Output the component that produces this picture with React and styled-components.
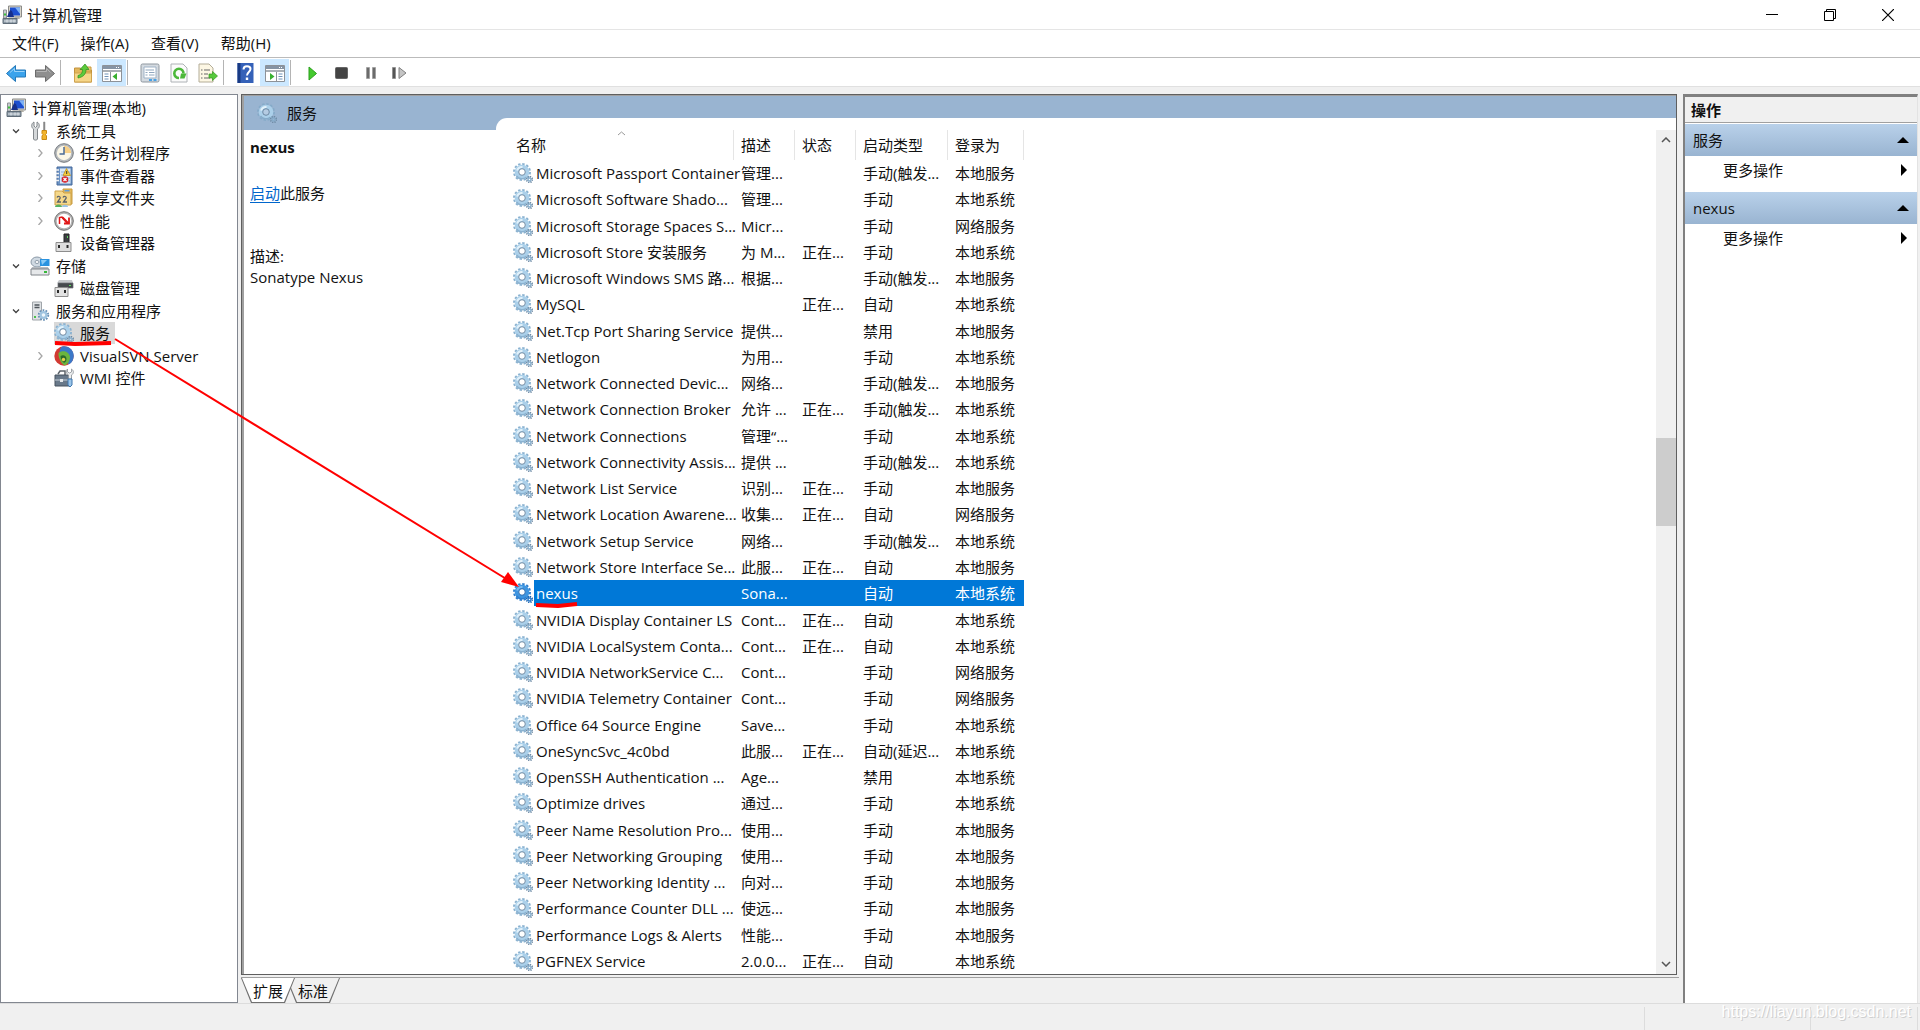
import React from 'react'
import styled, { createGlobalStyle, css } from 'styled-components'

const GlobalStyle = createGlobalStyle`
  * { box-sizing: border-box; }
  body {
    margin: 0;
    background: #f0f0f0;
    color: #111;
    font-family: "Open Sans", "Noto Sans CJK SC", sans-serif;
    font-size: 15px;
    line-height: 22px;
  }
  button { font: inherit; color: inherit; border: 0; padding: 0; background: none; }
  svg { display: block; flex: none; }
`

const Page = styled.div`
  position: relative;
  display: flex;
  flex-direction: column;
  min-height: 100vh;
  overflow: hidden;
`

/* title, menu and tool bars */

const TitleBar = styled.header`
  display: flex;
  align-items: center;
  height: 29px;
  padding: 0 3px 0 2px;
  background: #fff;
`

const WindowTitle = styled.h1`
  flex: 1;
  margin: 0 0 0 5px;
  font-size: 15px;
  font-weight: 400;
`

const WindowButton = styled.button`
  display: flex;
  justify-content: center;
  width: 58px;
`

const MenuBar = styled.nav`
  display: flex;
  align-items: flex-start;
  gap: 22px;
  height: 28px;
  padding: 2px 12px 0;
  background: #fff;
  border-top: 1px solid #e5e5e5;
`

const ToolBar = styled.div`
  display: flex;
  height: 30px;
  padding: 1px 1px 0;
  background: #fff;
  border-top: 1px solid #bbb;
  border-bottom: 1px solid #e0e0e0;
`

const Tool = styled.button`
  display: flex;
  align-items: center;
  justify-content: center;
  width: 29px;
  background: ${(props) => (props.$on ? '#cce8ff' : 'transparent')};
`

const ToolSep = styled.span`
  width: 1px;
  margin: 1px 7px 1px 1px;
  background: #b4b4b4;
`

/* work area */

const Work = styled.main`
  flex: 1;
  display: flex;
  padding: 7px 2px 0 0;
`

const TreePane = styled.ul`
  width: 238px;
  margin: 0 3px 0 0;
  padding: 2px 0;
  list-style: none;
  background: #fff;
  border: 1px solid #828790;
`

const TreeItem = styled.li`
  display: flex;
  align-items: center;
  height: 22px;
  padding-left: ${(props) => props.$level * 24 - 15}px;
  white-space: nowrap;
  &:nth-child(even) { height: 23px; }
  ${(props) => props.$level === 0 && css`padding-left: 5px;`}
`

const Twisty = styled.span`
  display: flex;
  width: 20px;
  padding-left: 2px;
`

const TreeLabel = styled.span`
  display: flex;
  align-items: center;
  gap: 6px;
  height: 100%;
  padding-right: 5px;
  background: ${(props) => (props.$selected ? '#d9d9d9' : 'transparent')};
`

const Center = styled.section`
  flex: 1;
  display: flex;
  flex-direction: column;
  margin-right: 4px;
`

const Frame = styled.div`
  flex: 1;
  display: grid;
  grid-template-columns: 252px 1fr;
  margin-right: 2px;
  margin-bottom: 2px;
  border: 1px solid #5f5f5f;
  box-shadow: inset 2px 1px 0 #a0a0a0;
  padding: 1px 0 0 2px;
`

const Details = styled.div`
  background: #fff;
`

const Banner = styled.div`
  display: flex;
  align-items: center;
  gap: 10px;
  height: 34px;
  padding-left: 13px;
  background: #99b4d1;
`

const ServiceName = styled.h2`
  margin: 6px 6px 24px;
  font-size: 15px;
  font-weight: 700;
`

const Line = styled.p`
  margin: 0 6px;
`

const StartLink = styled.a`
  color: #0066cc;
  text-decoration: underline;
  text-underline-offset: 3px;
`

const Description = styled.div`
  margin: 42px 6px 0;
  line-height: 21px;
`

const ListSide = styled.div`
  display: flex;
  padding-top: 22px;
  background: #99b4d1;
`

const ListBox = styled.div`
  flex: 1;
  display: flex;
  justify-content: space-between;
  padding: 12px 0 0 13px;
  background: #fff;
  border-top-left-radius: 11px;
`

const Table = styled.table`
  display: flex;
  flex-direction: column;
  width: 515px;
`

const Body = styled.tbody`
  flex: 1;
  display: grid;
  grid-auto-rows: 1fr;
`

const Row = styled.tr`
  display: grid;
  grid-template-columns: 225px 61px 61px 92px 76px;
  align-items: stretch;
`

const HeadCell = styled.th`
  position: relative;
  height: 30px;
  padding: 4px 7px 0;
  border-right: 1px solid #e5e5e5;
  font-weight: 400;
  text-align: left;
`

const SortMark = styled.svg`
  position: absolute;
  top: 1px;
  left: 108px;
`

const Cell = styled.td`
  display: flex;
  align-items: center;
  padding: 0 7px;
  white-space: nowrap;
  ${(props) => props.$selected && css`
    background: #0078d7;
    color: #fff;
  `}
`

const NameCell = styled.td`
  display: flex;
  align-items: center;
  padding: 0 0 0 4px;
  white-space: nowrap;
`

const NameText = styled.span`
  flex: 1;
  display: flex;
  align-items: center;
  align-self: stretch;
  margin-left: 1px;
  padding-left: 2px;
  ${(props) => props.$selected && css`
    background: #0078d7;
    color: #fff;
  `}
`

const ScrollBar = styled.div`
  display: flex;
  flex-direction: column;
  width: 20px;
  background: #f0f0f0;
`

const ScrollButton = styled.button`
  display: flex;
  align-items: center;
  justify-content: center;
  height: 20px;
`

const ScrollSpace = styled.div`
  flex: ${(props) => props.$grow};
`

const ScrollThumb = styled.div`
  flex: 22;
  background: #cdcdcd;
`

const TabStrip = styled.div`
  display: flex;
  height: 26px;
  border-top: 1px solid #a0a0a0;
`

const Tab = styled.button`
  position: relative;
  z-index: ${(props) => (props.$active ? 1 : 0)};
  width: 54px;
  height: 25px;
  margin-right: -9px;
  background: #707070;
  clip-path: polygon(0 0, 54px 0, 44px 25px, 10px 25px);
  &::before {
    content: '';
    position: absolute;
    z-index: -1;
    inset: 0;
    background: ${(props) => (props.$active ? '#fff' : '#f0f0f0')};
    clip-path: polygon(1px 0, 53px 0, 43px 24px, 11px 24px);
  }
`

/* actions pane */

const Actions = styled.aside`
  width: 235px;
  background: #fff;
  border-left: 2px solid #808080;
  border-top: 3px solid #808080;
  border-right: 1px solid #e3e3e3;
`

const ActionsTitle = styled.h2`
  height: 26px;
  margin: 0 0 1px;
  padding: 2px 6px;
  background: #f0f0f0;
  border-bottom: 1px solid #a0a0a0;
  font-size: 15px;
  font-weight: 700;
`

const ActionGroup = styled.button`
  display: flex;
  align-items: center;
  justify-content: space-between;
  width: 100%;
  height: 32px;
  padding: 0 8px;
  background: linear-gradient(#b9d1ea, #99b4d1);
`

const ActionItem = styled.button`
  display: flex;
  align-items: center;
  justify-content: space-between;
  width: 100%;
  height: 28px;
  margin-bottom: 8px;
  padding: 0 10px 0 38px;
`

const StatusBar = styled.footer`
  display: flex;
  justify-content: flex-end;
  height: 27px;
  padding: 3px 2px 0 0;
  border-top: 1px solid #dcdcdc;
`

const StatusPart = styled.span`
  width: ${(props) => props.$width}px;
  border-left: 1px solid #dcdcdc;
`

const Watermark = styled.span`
  position: absolute;
  right: 9px;
  bottom: 7px;
  color: #fff;
  font: 16px/22px "Liberation Sans", sans-serif;
  text-shadow: 1px 1px 0 #cfcfcf;
`

const Marks = styled.svg`
  position: absolute;
  top: 0;
  left: 0;
  z-index: 2;
  pointer-events: none;
`

/* icons */

const Icon = ({ children, size = 20 }) => (
  <svg width={size} height={size} viewBox="0 0 20 20" fill="none" aria-hidden="true">{children}</svg>
)

const GearIcon = ({ selected, pale }) => {
  const teeth = selected ? '#2f7fce' : pale ? '#86abc9' : '#8bb2d0'
  const edge = selected ? '#1c63ad' : '#6f8ba5'
  const body = selected ? '#3e95e0' : '#abd0ea'
  return (
    <Icon>
      <circle cx="9" cy="9" r="8" stroke={teeth} strokeWidth="2" strokeDasharray="2.400 1.790" />
      <circle cx="9" cy="9" r="5.300" stroke={body} strokeWidth="4" />
      <path d="M3.500 13a6.800 6.800 0 0 0 10 1" stroke={teeth} strokeWidth="1.500" />
      <path d="M4 7.500A5.500 5.500 0 0 1 9.500 4" stroke={selected ? '#7cbcf0' : '#e2f1fa'} strokeWidth="1.800" />
      <circle cx="9" cy="9" r="3.300" fill={pale ? '#b4cbe2' : '#fff'} stroke={edge} strokeWidth="1" />
      <circle cx="16.500" cy="16.500" r="2.800" stroke={edge} strokeWidth="1.800" strokeDasharray="1.200 1" />
      <circle cx="16.500" cy="16.500" r="1.500" stroke={teeth} strokeWidth="1.500" />
    </Icon>
  )
}

const ComputerIcon = () => (
  <Icon>
    <path d="M6.500 1h13v11h-13z" fill="#d9d6cc" stroke="#8b8b88" />
    <path d="M8 2.500h10v8H8z" fill="#1d4fd0" />
    <path d="M13 2.500h5V9z" fill="#7eb2f5" />
    <path d="M13 12h4l1 2h-5z" fill="#b5b2a8" />
    <path d="M1.500 5h3v8h-3z" fill="#c9ccd0" stroke="#8e9296" />
    <path d="M2 8.500h2v2H2z" fill="#3cc13c" />
    <path d="M5 12l3-7 2 1 2 6z" fill="#17308c" />
    <path d="M1 13.500h14v5H1z" fill="#8b98a4" stroke="#5f6c78" />
    <path d="M2 16h12M5 14.500v3M9 14.500v3M12 14.500v3" stroke="#dfe5ea" />
  </Icon>
)

const ToolsIcon = () => (
  <Icon>
    <path d="M4 1v4l1.500 1.500L7 5V1c3 1.500 3 5.500.5 7v10c0 1.500-4 1.500-4 0V8C1 6.500 1 2.500 4 1z" fill="#d5d8da" stroke="#83888c" />
    <path d="M13.500 1h1.500v8h-1.500z" fill="#888" stroke="#888" strokeWidth=".5" />
    <path d="M12 9.500h4.500v3l-1 1 1 1.500v3.500H12V15l1-1.500-1-1z" fill="#f3b52c" stroke="#c98a12" />
  </Icon>
)

const ClockIcon = () => (
  <Icon>
    <circle cx="10" cy="10" r="9.300" fill="#b4b8bc" stroke="#74787d" />
    <circle cx="10" cy="10" r="7.200" fill="#fbf6e6" />
    <path d="M10 10V2.800A7.200 7.200 0 0 1 17.200 10z" fill="#f7cf86" />
    <path d="M10 4v7H5.500" stroke="#4b6b96" strokeWidth="1.500" />
  </Icon>
)

const EventIcon = () => (
  <Icon>
    <path d="M3 1h15v18H3z" fill="#6c93c4" stroke="#44689b" />
    <path d="M6 2.500h10.500v15H6z" fill="#d8e6f6" />
    <path d="M7 6h9M7 9h9M7 12h9M7 15h9" stroke="#8fb0d6" />
    <path d="M2 4h3M2 7.500h3M2 11h3M2 14.500h3" stroke="#f2f2f2" strokeWidth="1.500" />
    <path d="M12.500 2.500l4 7H9z" fill="#f6cc3c" stroke="#c08c12" strokeWidth=".7" />
    <path d="M12.700 5v3" stroke="#333" />
    <circle cx="11" cy="13.500" r="3.300" fill="#d6202a" />
    <path d="M9.500 12l3 3M12.500 12l-3 3" stroke="#fff" strokeWidth="1.200" />
  </Icon>
)

const ShareIcon = () => (
  <Icon>
    <path d="M9 1h9v15H9z" fill="#e4b95c" stroke="#c99b3d" />
    <path d="M1 3h7l2 2h7v12H1z" fill="#f5d88a" stroke="#cda24a" />
    <path d="M10.500 2h5v1.500h-5z" fill="#5f9bd8" />
    <path d="M3 9.500c1-2 4-1 3 1L3.500 14H7M9 9.500c1-2 4-1 3 1L9.500 14H13" stroke="#5c636b" strokeWidth="1.300" />
    <path d="M1 19c0-3.500 7-3.500 7 0z" fill="#56b264" />
    <path d="M8 19c0-3 6-3 6 0z" fill="#9cc4e6" />
  </Icon>
)

const PerfIcon = () => (
  <Icon>
    <circle cx="10" cy="10" r="9.300" fill="#b3b3b3" stroke="#707070" />
    <circle cx="10" cy="10" r="7.300" fill="#fff" />
    <path d="M5.500 13V6.500L8 6l5 6" stroke="#e01818" strokeWidth="1.500" />
    <path d="M10 12.500h5v-6" stroke="#e01818" strokeWidth="1.800" />
    <path d="M8.500 6.500l6 6" stroke="#e01818" strokeWidth="2.200" />
  </Icon>
)

const DeviceIcon = () => (
  <Icon>
    <path d="M10 1h5v9h-5z" fill="#3c3f42" stroke="#222" />
    <path d="M13 3h1v2h-1z" fill="#61d661" />
    <path d="M2 9.500h15v9H2z" fill="#dedede" stroke="#8d8d8d" />
    <path d="M4 12h2v3H4zM12.500 12h2v3h-2z" fill="#2b2b2b" />
  </Icon>
)

const StorageIcon = () => (
  <Icon>
    <ellipse cx="7" cy="6" rx="6" ry="5" fill="#cfd9e2" stroke="#8c9aa8" />
    <ellipse cx="7" cy="6" rx="2" ry="1.500" fill="#fff" stroke="#8c9aa8" />
    <path d="M10 3h9.500v7H10z" fill="#2a93e0" />
    <path d="M11 4h6l-5 5z" fill="#8acbf6" />
    <path d="M2 11h16l1 3H1z" fill="#b5babf" />
    <path d="M1 13h18v6H1z" fill="#e6e8ea" stroke="#80858a" />
    <path d="M14 15h3v2h-3z" fill="#37b83a" />
  </Icon>
)

const DiskIcon = () => (
  <Icon>
    <path d="M5 2h13l1 3H3z" fill="#c6c9cc" />
    <path d="M4 5h15v5H4z" fill="#45494d" stroke="#6b6f72" strokeWidth=".7" />
    <path d="M15 7h2v1h-2z" fill="#5be05b" />
    <path d="M1 9.500h13v9H1z" fill="#e2e2e2" stroke="#8d8d8d" />
    <path d="M3 12h2v3H3zM10 12h2v3h-2z" fill="#2b2b2b" />
  </Icon>
)

const ServerIcon = () => (
  <Icon>
    <path d="M2.500 1h9v18h-9z" fill="#dfe2e5" stroke="#a0a5aa" />
    <path d="M4.500 4h5M4.500 6.500h5" stroke="#4f565c" strokeWidth="1.300" />
    <path d="M4 15h2v2H4z" fill="#4ac04a" />
    <circle cx="13.500" cy="14" r="4.700" stroke="#6890b5" strokeWidth="2" strokeDasharray="1.700 1.250" />
    <circle cx="13.500" cy="14" r="2.900" fill="#eef6fb" stroke="#9fc4e0" strokeWidth="2.200" />
  </Icon>
)

const SvnIcon = () => (
  <Icon>
    <circle cx="10" cy="10" r="9.700" fill="#d23a32" />
    <path d="M8 .5C16-1 21 6 19.500 12c-1 4-3 6-5 6.500-1-5-3-7-9-10.500 0-4 1-7 2.500-7.500z" fill="#3c78c8" />
    <path d="M4.500 7C8 4 15 5 16 11c0 4-2 7-5 8.500C8 19 4 12 4.500 7z" fill="#6bb53f" />
    <path d="M6.500 10c3-2 6 0 6 3 0 2-1 3-2.500 4-2-2-3.500-4-3.500-7z" fill="#2c6b2b" />
    <circle cx="9.500" cy="13.500" r="1.700" fill="#e5d04c" />
  </Icon>
)

const WmiIcon = () => (
  <Icon>
    <path d="M4 6l2-3h5v4" stroke="#5d646b" strokeWidth="1.500" />
    <path d="M1 7h13l3 2v9H1z" fill="#69798a" stroke="#46525e" />
    <path d="M1 12h13" stroke="#c9d2da" />
    <path d="M6 11h3v3H6z" fill="#e5e9ec" />
    <path d="M13.500 1v3l2 1 2-1V1c3 2 2 5 0 6v4h-3V7c-2-1-3-4-1-6z" fill="#eceeef" stroke="#8b9095" strokeWidth=".8" />
    <path d="M14 11h4v6l-2 2-2-2z" fill="#9cc6ea" stroke="#3f77ad" />
  </Icon>
)

const ArrowIcon = ({ color, light, edge, flip }) => (
  <Icon>
    <path
      d={flip ? 'M19.500 10.500l-9-8v4.500H.5v7h10v4.500z' : 'M.5 10.500l9-8v4.500h10v7h-10v4.500z'}
      fill={color}
      stroke={edge}
    />
    <path d={flip ? 'M1.500 8.500h10v-3l4 4' : 'M4 9.500l4.500-4v3h10'} stroke={light} />
  </Icon>
)

const FolderUpIcon = () => (
  <Icon>
    <path d="M1.500 5h6l1.500 2h9.500v12h-17z" fill="#e3b65c" stroke="#c2923c" />
    <path d="M12 4h6v4h-6z" fill="#f0cd83" stroke="#c99a3c" />
    <path d="M1.500 10h17v9h-17z" fill="#f6d689" stroke="#cfa24c" />
    <path d="M5 12.500c3.500-1 4.500-3 4.500-6H7l5-5.500 4 5.500h-3c0 5-3 7.500-8 8.500z" fill="#5ccb3c" stroke="#2f8c1e" strokeWidth=".7" />
  </Icon>
)

const PaneIcon = ({ right }) => (
  <Icon>
    <path d="M.5 2.500h19v16H.5z" fill="#fff" stroke="#8d9298" />
    <path d="M1 3h18v3H1z" fill="#8694a4" />
    <path d="M14 4.500h1M16 4.500h1" stroke="#fff" />
    <path d="M1 8h18" stroke="#a9afb5" strokeWidth="2" />
    <path d={right ? 'M11.500 9v9' : 'M8.500 9v9'} stroke="#8d9298" />
    <path d={right ? 'M13.500 11h4M13.500 13.500h4M13.500 16h4' : 'M2.500 11h4M2.500 13.500h4M2.500 16h4'} stroke="#6f92b8" />
    <path d={right ? 'M5 10l4.500 3.500L5 17z' : 'M15 10l-4.500 3.500L15 17z'} fill="#39b02f" />
  </Icon>
)

const PropsIcon = () => (
  <Icon>
    <rect x="1" y="1" width="18" height="18" rx="1.500" fill="#d4dae0" stroke="#8f979f" />
    <path d="M4 4h12v11H4z" fill="#fff" stroke="#9fb2c6" />
    <path d="M5.500 7H14M5.500 9.500h2M9 9.500h5.500M5.500 12h2M9 12h5.500" stroke="#8fa6be" />
    <path d="M9 17h3M13.500 17h3" stroke="#49a2e6" strokeWidth="2" />
  </Icon>
)

const RefreshIcon = () => (
  <Icon>
    <path d="M2 1h12l4 4v14H2z" fill="#fbfbfb" stroke="#aeb2b6" />
    <path d="M10 15a4.600 4.600 0 1 1 4.500-4.500" stroke="#4cb83a" strokeWidth="2.600" />
    <path d="M17.500 10.500l-2 5h-4.500l1-5z" fill="#4cb83a" />
  </Icon>
)

const ExportIcon = () => (
  <Icon>
    <path d="M1 1h10l4 4v14H1z" fill="#fdf7e4" stroke="#b3ac97" />
    <path d="M3 7h1.500M3 11h1.500M3 15h1.500M6 7h6M6 11h4M6 15h6" stroke="#666" strokeWidth="1.200" />
    <path d="M11 11h3.500V8.500l5 4.500-5 4.500V15H11z" fill="#57c93c" stroke="#35961f" strokeWidth=".7" />
  </Icon>
)

const HelpIcon = () => (
  <Icon>
    <path d="M1.500 0h16v20h-16z" fill="#3561b8" />
    <path d="M1.500 0h3v20h-3z" fill="#183a84" />
    <path d="M7.500 6.500c0-4.500 7-4 7-.5 0 3-3.500 3-3.500 6.500" stroke="#fff" strokeWidth="2" />
    <path d="M9.800 14.500h2.400V17H9.800z" fill="#fff" />
  </Icon>
)

const PlayIcon = () => (
  <Icon><path d="M6 4l7.500 6.500L6 17z" fill="#45c92f" stroke="#2ba01c" /></Icon>
)

const StopIcon = () => (
  <Icon><rect x="3.500" y="4.500" width="12" height="11" rx="1" fill="#444" stroke="#666" /></Icon>
)

const PauseIcon = () => (
  <Icon><path d="M5.500 4.500h3v11h-3zM11.500 4.500h3v11h-3z" fill="#6b6b6b" stroke="#999" strokeWidth=".7" /></Icon>
)

const StepIcon = () => (
  <Icon>
    <path d="M2.500 4.500h3v11h-3z" fill="#555" stroke="#888" strokeWidth=".7" />
    <path d="M9 4.500l7 5.500-7 5.500z" fill="#c4c4c4" stroke="#808080" />
  </Icon>
)

const Chevron = ({ open }) => (
  <svg width="8" height="8" viewBox="0 0 8 8" fill="none">
    <path d={open ? 'M1 2.500l3 3 3-3' : 'M2.500 0l3.500 4-3.500 4'} stroke={open ? '#404040' : '#a6a6a6'} strokeWidth="1.300" />
  </svg>
)

/* data */

const menus = ['文件(F)', '操作(A)', '查看(V)', '帮助(H)']

const tools = [
  { label: 'Back', icon: <ArrowIcon color="#3ba3ec" light="#9bd3f8" edge="#2478b8" /> },
  { label: 'Forward', icon: <ArrowIcon color="#8f8f8f" light="#b5b5b5" edge="#6c6c6c" flip /> },
  null,
  { label: 'Up', icon: <FolderUpIcon /> },
  { label: 'Tree', icon: <PaneIcon />, on: true },
  null,
  { label: 'Properties', icon: <PropsIcon /> },
  { label: 'Refresh', icon: <RefreshIcon /> },
  { label: 'Export', icon: <ExportIcon /> },
  null,
  { label: 'Help', icon: <HelpIcon /> },
  { label: 'Actions', icon: <PaneIcon right />, on: true },
  null,
  { label: 'Start', icon: <PlayIcon /> },
  { label: 'Stop', icon: <StopIcon /> },
  { label: 'Pause', icon: <PauseIcon /> },
  { label: 'Restart', icon: <StepIcon /> },
]

const tree = [
  { level: 0, text: '计算机管理(本地)', icon: <ComputerIcon /> },
  { level: 1, text: '系统工具', icon: <ToolsIcon />, twisty: 'open' },
  { level: 2, text: '任务计划程序', icon: <ClockIcon />, twisty: 'closed' },
  { level: 2, text: '事件查看器', icon: <EventIcon />, twisty: 'closed' },
  { level: 2, text: '共享文件夹', icon: <ShareIcon />, twisty: 'closed' },
  { level: 2, text: '性能', icon: <PerfIcon />, twisty: 'closed' },
  { level: 2, text: '设备管理器', icon: <DeviceIcon /> },
  { level: 1, text: '存储', icon: <StorageIcon />, twisty: 'open' },
  { level: 2, text: '磁盘管理', icon: <DiskIcon /> },
  { level: 1, text: '服务和应用程序', icon: <ServerIcon />, twisty: 'open' },
  { level: 2, text: '服务', icon: <GearIcon />, selected: true },
  { level: 2, text: 'VisualSVN Server', icon: <SvnIcon />, twisty: 'closed' },
  { level: 2, text: 'WMI 控件', icon: <WmiIcon /> },
]

const columns = ['名称', '描述', '状态', '启动类型', '登录为']

const services = [
  ['Microsoft Passport Container', '管理...', '', '手动(触发...', '本地服务'],
  ['Microsoft Software Shado...', '管理...', '', '手动', '本地系统'],
  ['Microsoft Storage Spaces S...', 'Micr...', '', '手动', '网络服务'],
  ['Microsoft Store 安装服务', '为 M...', '正在...', '手动', '本地系统'],
  ['Microsoft Windows SMS 路...', '根据...', '', '手动(触发...', '本地服务'],
  ['MySQL', '', '正在...', '自动', '本地系统'],
  ['Net.Tcp Port Sharing Service', '提供...', '', '禁用', '本地服务'],
  ['Netlogon', '为用...', '', '手动', '本地系统'],
  ['Network Connected Devic...', '网络...', '', '手动(触发...', '本地服务'],
  ['Network Connection Broker', '允许 ...', '正在...', '手动(触发...', '本地系统'],
  ['Network Connections', '管理“...', '', '手动', '本地系统'],
  ['Network Connectivity Assis...', '提供 ...', '', '手动(触发...', '本地系统'],
  ['Network List Service', '识别...', '正在...', '手动', '本地服务'],
  ['Network Location Awarene...', '收集...', '正在...', '自动', '网络服务'],
  ['Network Setup Service', '网络...', '', '手动(触发...', '本地系统'],
  ['Network Store Interface Se...', '此服...', '正在...', '自动', '本地服务'],
  ['nexus', 'Sona...', '', '自动', '本地系统'],
  ['NVIDIA Display Container LS', 'Cont...', '正在...', '自动', '本地系统'],
  ['NVIDIA LocalSystem Conta...', 'Cont...', '正在...', '自动', '本地系统'],
  ['NVIDIA NetworkService C...', 'Cont...', '', '手动', '网络服务'],
  ['NVIDIA Telemetry Container', 'Cont...', '', '手动', '网络服务'],
  ['Office 64 Source Engine', 'Save...', '', '手动', '本地系统'],
  ['OneSyncSvc_4c0bd', '此服...', '正在...', '自动(延迟...', '本地系统'],
  ['OpenSSH Authentication ...', 'Age...', '', '禁用', '本地系统'],
  ['Optimize drives', '通过...', '', '手动', '本地系统'],
  ['Peer Name Resolution Pro...', '使用...', '', '手动', '本地服务'],
  ['Peer Networking Grouping', '使用...', '', '手动', '本地服务'],
  ['Peer Networking Identity ...', '向对...', '', '手动', '本地服务'],
  ['Performance Counter DLL ...', '使远...', '', '手动', '本地服务'],
  ['Performance Logs & Alerts', '性能...', '', '手动', '本地服务'],
  ['PGFNEX Service', '2.0.0...', '正在...', '自动', '本地系统'],
]

const App = () => {
  return (
    <Page>
      <GlobalStyle />
      <TitleBar>
        <ComputerIcon />
        <WindowTitle>计算机管理</WindowTitle>
        <WindowButton aria-label="Minimize">
          <svg width="12" height="12"><path d="M0 5.500h12" stroke="#000" /></svg>
        </WindowButton>
        <WindowButton aria-label="Restore">
          <svg width="12" height="12" fill="none" stroke="#000">
            <path d="M.5 2.500h9v9h-9zM2.500 2.500v-2h9v9h-2" />
          </svg>
        </WindowButton>
        <WindowButton aria-label="Close">
          <svg width="12" height="12"><path d="M0 0l12 12M12 0L0 12" stroke="#000" strokeWidth="1.200" /></svg>
        </WindowButton>
      </TitleBar>

      <MenuBar>
        {menus.map((m) => <button key={m}>{m}</button>)}
      </MenuBar>

      <ToolBar>
        {tools.map((t, i) => (
          t ? <Tool key={i} $on={t.on} aria-label={t.label}>{t.icon}</Tool> : <ToolSep key={i} />
        ))}
      </ToolBar>

      <Work>
        <TreePane>
          {tree.map((item) => (
            <TreeItem key={item.text} $level={item.level}>
              {item.level > 0 && (
                <Twisty>{item.twisty && <Chevron open={item.twisty === 'open'} />}</Twisty>
              )}
              <TreeLabel $selected={item.selected}>{item.icon}{item.text}</TreeLabel>
            </TreeItem>
          ))}
        </TreePane>

        <Center>
          <Frame>
            <Details>
              <Banner><GearIcon pale />服务</Banner>
              <ServiceName>nexus</ServiceName>
              <Line><StartLink href="#start">启动</StartLink>此服务</Line>
              <Description>
                描述:
                <br />
                Sonatype Nexus
              </Description>
            </Details>
            <ListSide>
              <ListBox>
                <Table>
                  <thead>
                    <Row>
                      {columns.map((c, i) => (
                        <HeadCell key={c}>
                          {c}
                          {i === 0 && (
                            <SortMark width="9" height="5" fill="none">
                              <path d="M1 4l3.500-3L8 4" stroke="#999" />
                            </SortMark>
                          )}
                        </HeadCell>
                      ))}
                    </Row>
                  </thead>
                  <Body>
                    {services.map(([name, ...rest]) => {
                      const selected = name === 'nexus'
                      return (
                        <Row key={name}>
                          <NameCell>
                            <GearIcon selected={selected} />
                            <NameText $selected={selected}>{name}</NameText>
                          </NameCell>
                          {rest.map((value, i) => <Cell key={i} $selected={selected}>{value}</Cell>)}
                        </Row>
                      )
                    })}
                  </Body>
                </Table>
                <ScrollBar>
                  <ScrollButton aria-label="Scroll up">
                    <svg width="10" height="6" fill="none"><path d="M1 5l4-4 4 4" stroke="#555" strokeWidth="1.500" /></svg>
                  </ScrollButton>
                  <ScrollSpace $grow={72} />
                  <ScrollThumb />
                  <ScrollSpace $grow={107} />
                  <ScrollButton aria-label="Scroll down">
                    <svg width="10" height="6" fill="none"><path d="M1 1l4 4 4-4" stroke="#555" strokeWidth="1.500" /></svg>
                  </ScrollButton>
                </ScrollBar>
              </ListBox>
            </ListSide>
          </Frame>
          <TabStrip>
            <Tab $active>扩展</Tab>
            <Tab>标准</Tab>
          </TabStrip>
        </Center>

        <Actions>
          <ActionsTitle>操作</ActionsTitle>
          {['服务', 'nexus'].map((group) => (
            <React.Fragment key={group}>
              <ActionGroup>
                {group}
                <svg width="12" height="6"><path d="M0 6l6-6 6 6z" fill="#000" /></svg>
              </ActionGroup>
              <ActionItem>
                更多操作
                <svg width="6" height="12"><path d="M0 0l6 6-6 6z" fill="#000" /></svg>
              </ActionItem>
            </React.Fragment>
          ))}
        </Actions>
      </Work>

      <StatusBar>
        <StatusPart $width={166} />
        <StatusPart $width={107} />
        <StatusPart $width={1} />
      </StatusBar>

      <Watermark>https://liayun.blog.csdn.net</Watermark>

      <Marks width="620" height="620" fill="none" stroke="#f00">
        <path d="M55 343l20 1 36-1" strokeWidth="4" />
        <path d="M115 339l393 241" strokeWidth="2" />
        <path d="M519 587l-11-15-7 10z" fill="#f00" stroke="none" />
        <path d="M536 605l22 1 19-2" strokeWidth="4" />
      </Marks>
    </Page>
  )
}

export default App
